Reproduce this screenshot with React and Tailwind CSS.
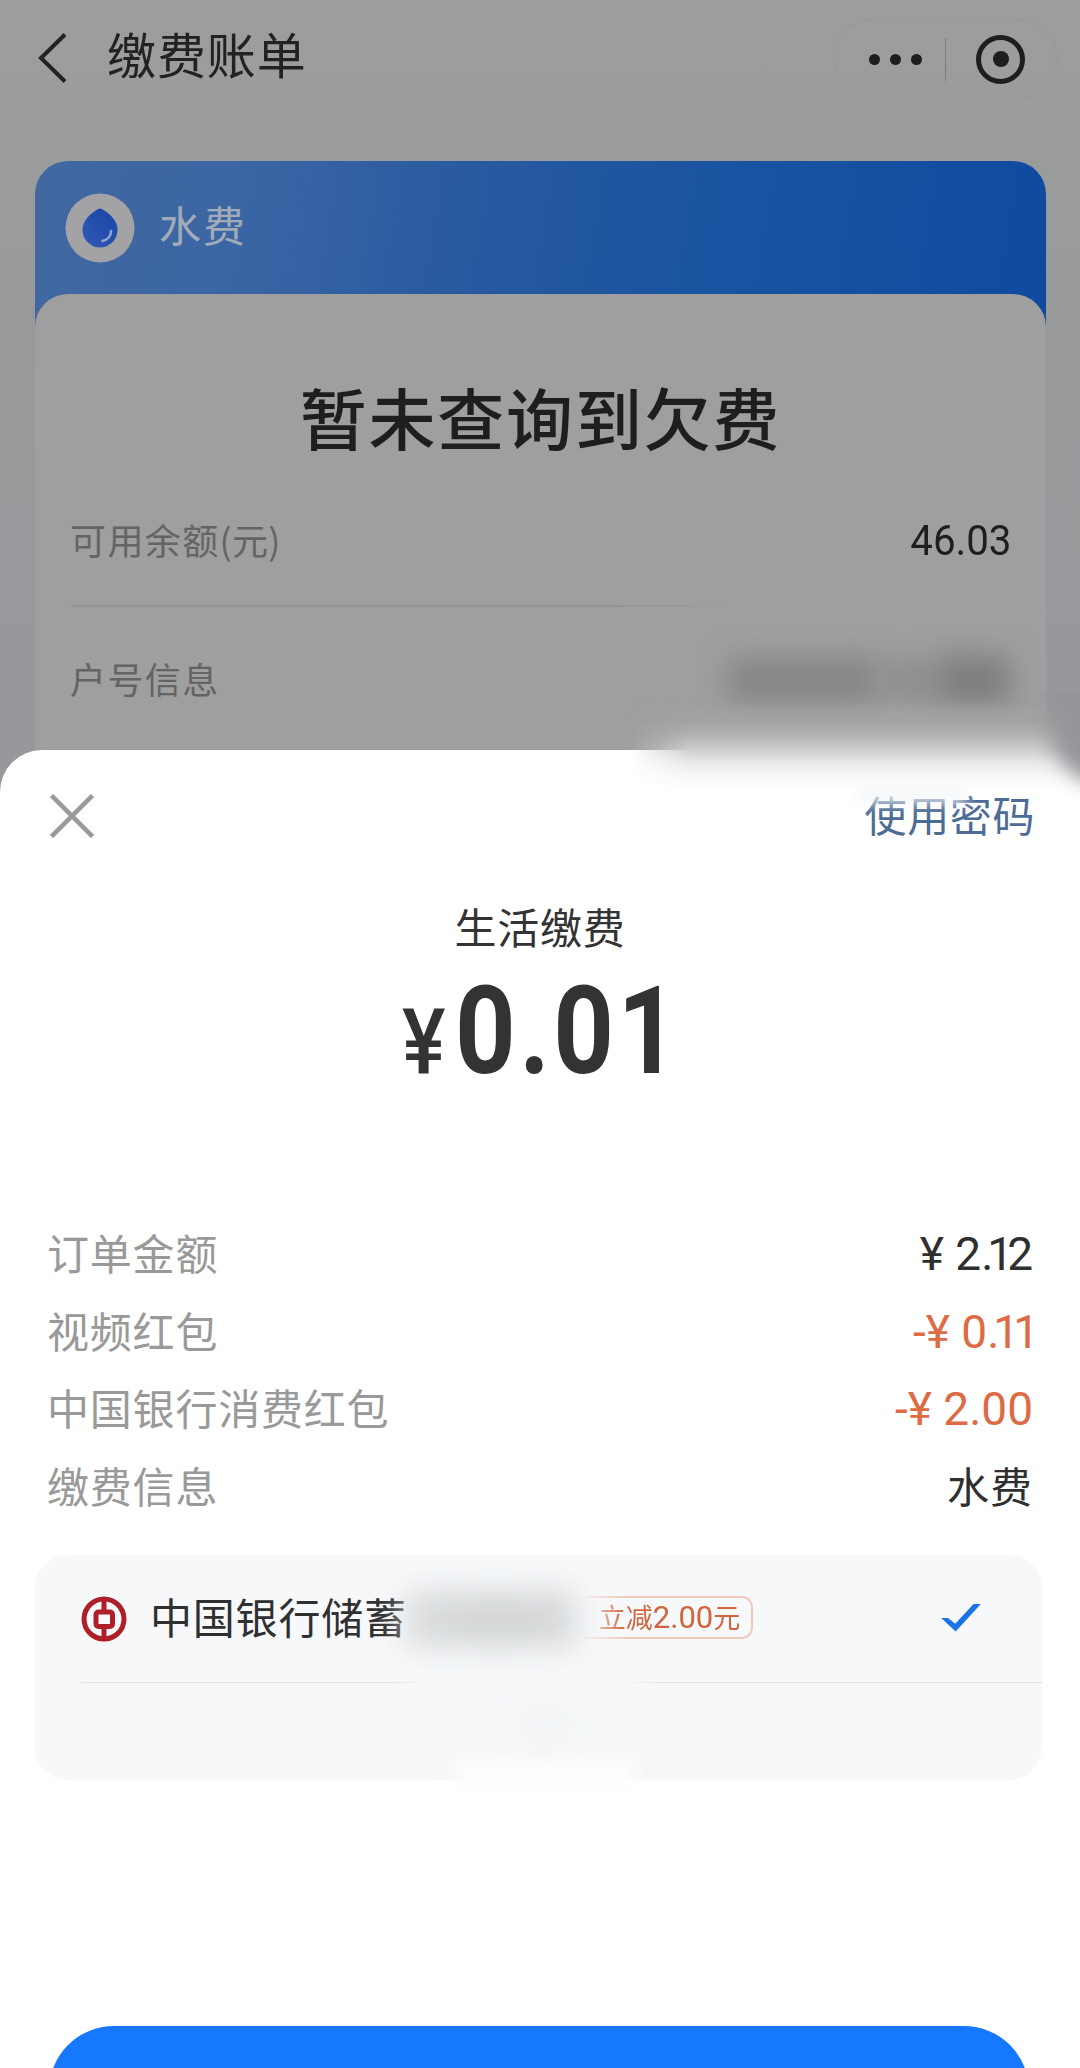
import React from "react";

const orderRows = [
  { label: "订单金额", value: "¥ 2.12", type: "price" },
  { label: "视频红包", value: "-¥ 0.11", type: "discount" },
  { label: "中国银行消费红包", value: "-¥ 2.00", type: "discount" },
  { label: "缴费信息", value: "水费", type: "text" },
];

const valueStyles = {
  price: "font-['Roboto'] text-[46px] text-[#2f2f2f]",
  discount: "font-['Roboto'] text-[46px] text-[#dd6b45]",
  text: "mb-[6px] text-[42px] tracking-[1px] text-[#2f2f2f]",
};

// proportional figures: the 1 is set tighter than the other digits
function Amount({ value }) {
  return value.split(/(\.1+)/).map((part, i) =>
    part.startsWith(".1") ? (
      <span key={i} className="tracking-[-6px]">
        {part}
      </span>
    ) : (
      part
    )
  );
}

function WaterIcon() {
  return (
    <svg className="h-[70px] w-[70px]" viewBox="0 0 70 70">
      <defs>
        <linearGradient id="drop" x1="0" y1="1" x2="1" y2="0">
          <stop offset="0" stopColor="#3558b4" />
          <stop offset="1" stopColor="#1546a6" />
        </linearGradient>
      </defs>
      <circle cx="35" cy="35" r="34.5" fill="#a3a3a6" />
      <path
        d="M35 15.500c1.600 0 3 1 5 2.500C47 22.500 52.500 29 52.500 37a17.500 17.500 0 0 1-35 0C17.500 29 23 22.500 30 18c2-1.500 3.400-2.500 5-2.500z"
        fill="url(#drop)"
      />
      <path
        d="M46 38c0 5-3.500 9-8.500 10"
        fill="none"
        stroke="#8fa5cf"
        strokeWidth="2.600"
        strokeLinecap="round"
      />
    </svg>
  );
}

function BankLogo() {
  return (
    <svg
      className="h-[46px] w-[46px]"
      viewBox="0 0 46 46"
      fill="none"
      stroke="#ae1f27"
    >
      <circle cx="23" cy="23" r="20" strokeWidth="5" />
      <rect x="15" y="16" width="16.500" height="14.500" rx="2.500" strokeWidth="5" />
      <path d="M23 3v12M23 31v12" strokeWidth="5" />
    </svg>
  );
}

function TopBar() {
  return (
    <div className="flex h-[161px] items-start pl-[38px] pr-[22px] pt-[18px]">
      <svg className="mt-[15px] h-[50px] w-[30px]" viewBox="0 0 30 50">
        <path
          d="M27 1.500L3 25l24 23.500"
          fill="none"
          stroke="#222"
          strokeWidth="4"
        />
      </svg>
      <h1 className="ml-[39px] -mt-[1px] text-[49px] leading-[72px] tracking-[0.900px] text-[#222]">
        缴费账单
      </h1>
      <div className="ml-auto flex h-[82px] w-[225px] items-center rounded-full border-2 border-[#999a99]">
        <div className="ml-[34px] flex gap-[10px]">
          <span className="h-[11px] w-[11px] rounded-full bg-[#1e1e1e]" />
          <span className="h-[11px] w-[11px] rounded-full bg-[#1e1e1e]" />
          <span className="h-[11px] w-[11px] rounded-full bg-[#1e1e1e]" />
        </div>
        <div className="ml-[23px] h-[43px] w-[1px] bg-[#7b7c7b]" />
        <div className="ml-[30px] flex h-[49px] w-[49px] items-center justify-center rounded-full border-[5.5px] border-[#1e1e1e]">
          <span className="h-[16px] w-[16px] rounded-full bg-[#1e1e1e]" />
        </div>
      </div>
    </div>
  );
}

function BillCard() {
  return (
    <div className="mx-[35px] h-[640px] w-[1011px] rounded-t-[33px] bg-[#9f9f9f]">
      <div className="h-[170px] rounded-t-[33px] bg-linear-[100deg,#41689f_0%,#3b66a4_20%,#285aa0_42%,#1a53a0_65%,#0f4a9f_100%]">
        <div className="flex h-[133px] items-center pl-[30px]">
          <WaterIcon />
          <span className="mb-[8px] ml-[24px] text-[42px] tracking-[2px] text-[#a3abb8]">
            水费
          </span>
        </div>
        <div className="h-[37px] rounded-t-[33px] bg-[#9f9f9f]" />
      </div>
      <h2 className="mt-[33px] text-center text-[67px] font-medium leading-[104px] tracking-[1.8px] text-[#1e1e1e]">
        暂未查询到欠费
      </h2>
      <div className="mx-[35px] mt-[12px] flex h-[125px] items-center justify-between">
        <span className="mb-[8px] text-[36px] tracking-[1.400px] text-[#646464]">
          可用余额<span className="tracking-[0.200px]">(元)</span>
        </span>
        <span className="mb-[5px] origin-right scale-x-[0.96] font-['Roboto'] text-[42px] text-[#1e1e1e]">
          46.03
        </span>
      </div>
      <div className="ml-[36px] h-[2px] w-[665px] bg-linear-to-r from-[#949494] from-80% to-[#9f9f9f]" />
      <div className="mx-[35px] mt-[36px] flex h-[74px] items-center justify-between">
        <span className="mb-[5px] text-[36px] tracking-[1.400px] text-[#646464]">
          户号信息
        </span>
        {/* masked account number */}
        <div className="mr-[2px] flex items-center">
          <div className="h-[44px] w-[150px] bg-[#858585] blur-[14px]" />
          <div className="h-[40px] w-[60px] bg-[#8f8f8f] blur-[13px]" />
          <div className="h-[48px] w-[72px] bg-[#7d7d7d] blur-[14px]" />
        </div>
      </div>
    </div>
  );
}

function PayMethod() {
  return (
    <div className="relative ml-[35px] mt-[29px] h-[225px] w-[1007px] rounded-[33px] bg-[#f6f8fa]">
      <div className="flex h-[127px] items-center pl-[46px]">
        <BankLogo />
        <span className="mb-[6px] ml-[23px] whitespace-nowrap text-[42px] tracking-[0.800px] text-[#303030]">
          中国银行储蓄
        </span>
        <div className="z-10 -ml-[2px] h-[56px] w-[170px] bg-linear-to-r from-[#dcdee0] via-[#d3d5d6] to-[#d8dadc] blur-[14px]" />
        <div className="mb-[2px] ml-[3px] flex h-[43px] items-center whitespace-nowrap rounded-[11px] border-2 border-[#f0c9b9] pl-[19px] pr-[11px] text-[27px] text-[#d0663d] [mask-image:linear-gradient(90deg,transparent_0,black_48px)]">
          <span className="mb-[2px]">立减</span>
          <span className="font-['Roboto'] text-[31px] leading-none">2.00</span>
          <span className="mb-[2px]">元</span>
        </div>
        <svg className="mb-[3px] ml-auto mr-[60px] h-[29px] w-[42px]" viewBox="0 0 42 30">
          <path
            d="M0.500 15.500h7l7.500 6L34 1h7.500L15.500 29.500z"
            fill="#1a73e8"
          />
        </svg>
      </div>
      <div className="ml-[46px] flex justify-between">
        <div className="h-[1px] w-[345px] bg-linear-to-r from-[#e2e4e6] from-90% to-[#f6f8fa]" />
        <div className="h-[1px] w-[422px] bg-linear-to-r from-[#f6f8fa] to-[#e0e2e4] to-10%" />
      </div>
      {/* smear under the masked card number */}
      <div className="absolute left-[420px] top-[205px] h-[30px] w-[180px] bg-[#fcfdfd] blur-[8px]" />
      <div className="absolute left-[485px] top-[148px] h-[44px] w-[50px] bg-[#f2f4f6] blur-[12px]" />
    </div>
  );
}

function PaySheet() {
  return (
    <div className="relative -mt-[51px] h-[1318px] rounded-t-[42px] bg-white">
      {/* soft edge on the right side of the sheet */}
      <div className="absolute -top-[50px] left-[630px] right-0 h-[90px] bg-linear-[180deg,#9f9f9f00_0%,#a3a3a3_24%,#b0b0b0_37%,#c6c6c6_51%,#d6d6d6_60%,#e9e9e9_70%,#f7f7f7_84%,#ffffff_100%] [mask-image:linear-gradient(90deg,transparent_0,black_60px)]" />
      <div className="absolute -top-[60px] left-[1020px] h-[130px] w-[60px] overflow-hidden">
        <div className="absolute -top-[30px] left-[30px] h-[126px] w-[80px] rounded-bl-[60px] bg-[#94969a] blur-[10px]" />
      </div>

      <div className="flex items-center justify-between pl-[50px] pr-[45px] pt-[36px]">
        <svg className="mt-[2px] h-[44px] w-[44px]" viewBox="0 0 44 44">
          <path d="M1.500 1.500l41 41M42.500 1.500l-41 41" stroke="#999" strokeWidth="4.500" />
        </svg>
        <div className="relative -mt-[2px] text-[42px] leading-[60px] tracking-[0.600px] text-[#4c6c95]">
          使用密码
          <div className="absolute -left-[8px] top-[2px] h-[18px] w-[110px] bg-[#f4f6f9]/80 blur-[6px]" />
        </div>
      </div>

      <div className="mt-[52px] text-center text-[42px] leading-[60px] tracking-[0.800px] text-[#333]">
        生活缴费
      </div>
      <div className="mt-[10px] flex h-[130px] items-baseline pl-[402px] font-['Roboto'] text-[#333]">
        <span className="w-[53px] origin-left scale-x-[0.9] text-[91px] font-medium leading-[130px]">
          ¥
        </span>
        <span className="origin-left scale-x-[0.860] text-[123px] font-bold leading-[130px] tracking-[4px]">
          0.01
        </span>
      </div>

      <div className="mt-[120px] flex flex-col pl-[47px] pr-[47px]">
        {orderRows.map((row) => (
          <div
            key={row.label}
            className="flex h-[77.6px] items-center justify-between whitespace-nowrap"
          >
            <span className="mb-[6px] text-[42px] tracking-[0.800px] text-[#999]">
              {row.label}
            </span>
            <span className={valueStyles[row.type]}>
              <Amount value={row.value} />
            </span>
          </div>
        ))}
      </div>

      <PayMethod />

      <button className="ml-[49px] mt-[246px] block h-[130px] w-[980px] rounded-full bg-[#1677ff]" />
    </div>
  );
}

export default function App() {
  return (
    <div className="h-[2068px] w-[1080px] overflow-hidden bg-linear-[180deg,#9c9e9c_0px,#9b9d9c_110px,#97999b_330px,#96989b_800px] font-['Noto_Sans_CJK_SC',sans-serif]">
      <TopBar />
      <BillCard />
      <PaySheet />
    </div>
  );
}
